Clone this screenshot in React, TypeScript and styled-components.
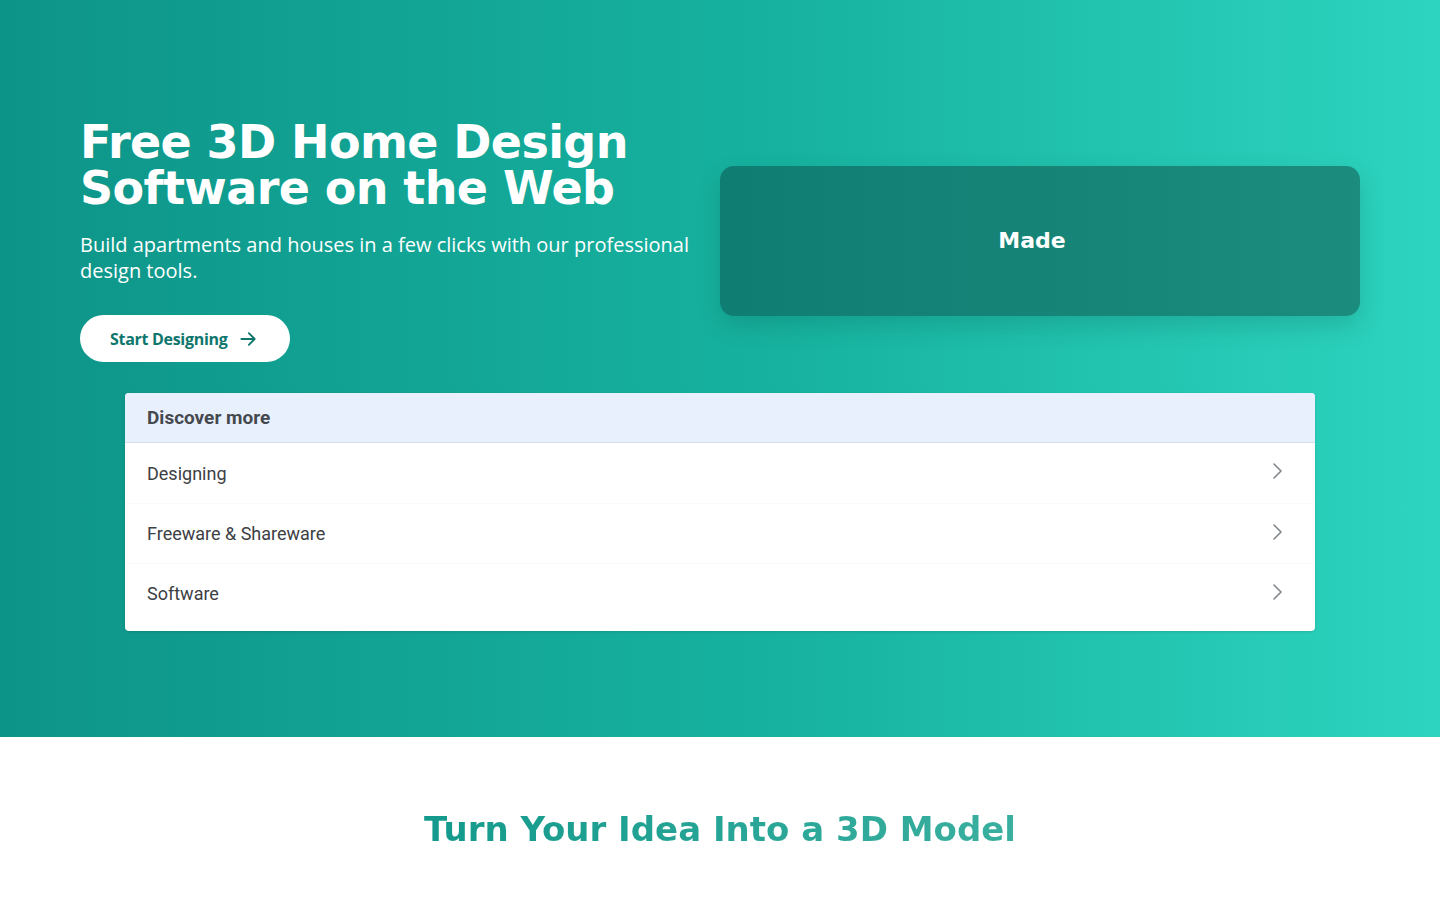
import React from "react";
import styled, { createGlobalStyle } from "styled-components";

const GlobalStyle = createGlobalStyle`
  * { box-sizing: border-box; }
  body {
    margin: 0;
    font-family: "Open Sans", "DejaVu Sans", sans-serif;
    background: #ffffff;
  }
`;

const Hero = styled.section`
  height: 737px;
  padding: 119px 80px 0;
  background: linear-gradient(90deg, #0d9488 0%, #17b3a0 55%, #2dd4bf 100%);
`;

const HeroGrid = styled.div`
  display: grid;
  grid-template-columns: 640px 640px;
  align-items: center;
`;

const Intro = styled.div`
  display: flex;
  flex-direction: column;
  align-items: flex-start;
`;

const Title = styled.h1`
  margin: 0;
  font-family: "DejaVu Sans", sans-serif;
  font-weight: 700;
  font-size: 46px;
  line-height: 46px;
  letter-spacing: -0.6px;
  color: #ffffff;
`;

const Lead = styled.p`
  margin: 21px 0 0;
  max-width: 625px;
  font-family: "Open Sans", sans-serif;
  font-size: 20px;
  line-height: 26px;
  color: #ffffff;
`;

const CTA = styled.button`
  margin-top: 31px;
  height: 47px;
  padding: 0 32px 0 30px;
  display: flex;
  align-items: center;
  gap: 11px;
  border: none;
  border-radius: 999px;
  background: #ffffff;
  color: #0f766e;
  font-family: "Open Sans", sans-serif;
  font-weight: 700;
  font-size: 16px;
  letter-spacing: -0.3px;
  cursor: pointer;
`;

const Showcase = styled.div`
  height: 150px;
  border-radius: 14px;
  display: flex;
  align-items: center;
  justify-content: center;
  background: linear-gradient(90deg, #107d72 0%, #1b8c7d 100%);
  box-shadow: 0 10px 24px rgba(0, 60, 50, 0.18);
  color: #ffffff;
  font-family: "DejaVu Sans", sans-serif;
  font-weight: 700;
  font-size: 22px;
  padding-right: 16px;
`;

const Discover = styled.div`
  width: 1190px;
  margin: 31px auto 0;
  background: #ffffff;
  border-radius: 4px;
  overflow: hidden;
  padding-bottom: 8px;
  box-shadow: 0 1px 3px rgba(0, 0, 0, 0.12);
`;

const DiscoverHead = styled.div`
  height: 50px;
  padding: 0 22px;
  display: flex;
  align-items: center;
  background: #e8f0fe;
  border-bottom: 1px solid #d7dcea;
  font-family: Roboto, "Open Sans", sans-serif;
  font-weight: 700;
  font-size: 19px;
  color: #45494e;
`;

const DiscoverRow = styled.a`
  height: 60px;
  padding: 0 32px 0 22px;
  display: flex;
  align-items: center;
  justify-content: space-between;
  text-decoration: none;
  font-family: Roboto, "Open Sans", sans-serif;
  font-size: 18px;
  color: #3c4043;
  & + & {
    border-top: 1px solid #fafafb;
  }
`;

const Chevron = styled.svg`
  width: 12px;
  height: 18px;
  margin-top: -4px;
`;

const Next = styled.section`
  padding: 72px 0 0;
  text-align: center;
`;

const NextTitle = styled.h2`
  margin: 0;
  display: inline-block;
  font-family: "DejaVu Sans", sans-serif;
  font-weight: 700;
  font-size: 34px;
  background: linear-gradient(90deg, #139a8c 0%, #3aaf9f 100%);
  -webkit-background-clip: text;
  background-clip: text;
  color: transparent;
`;

const topics = ["Designing", "Freeware & Shareware", "Software"];

export default function App() {
  return (
    <>
      <GlobalStyle />
      <Hero>
        <HeroGrid>
          <Intro>
            <Title>
              Free 3D Home Design
              <br />
              Software on the Web
            </Title>
            <Lead>
              Build apartments and houses in a few clicks with our professional
              design tools.
            </Lead>
            <CTA>
              Start Designing
              <svg width="20" height="20" viewBox="0 0 24 24" fill="none" stroke="#0f766e" strokeWidth="2.2" strokeLinecap="round" strokeLinejoin="round">
                <path d="M4 12h15" />
                <path d="M13 5l7 7-7 7" />
              </svg>
            </CTA>
          </Intro>
          <Showcase>Made</Showcase>
        </HeroGrid>
        <Discover>
          <DiscoverHead>Discover more</DiscoverHead>
          {topics.map((t) => (
            <DiscoverRow key={t} href="#">
              {t}
              <Chevron viewBox="0 0 12 18" fill="none" stroke="#80868b" strokeWidth="1.6" strokeLinecap="round" strokeLinejoin="round">
                <path d="M3 2l7 7-7 7" />
              </Chevron>
            </DiscoverRow>
          ))}
        </Discover>
      </Hero>
      <Next>
        <NextTitle>Turn Your Idea Into a 3D Model</NextTitle>
      </Next>
    </>
  );
}
